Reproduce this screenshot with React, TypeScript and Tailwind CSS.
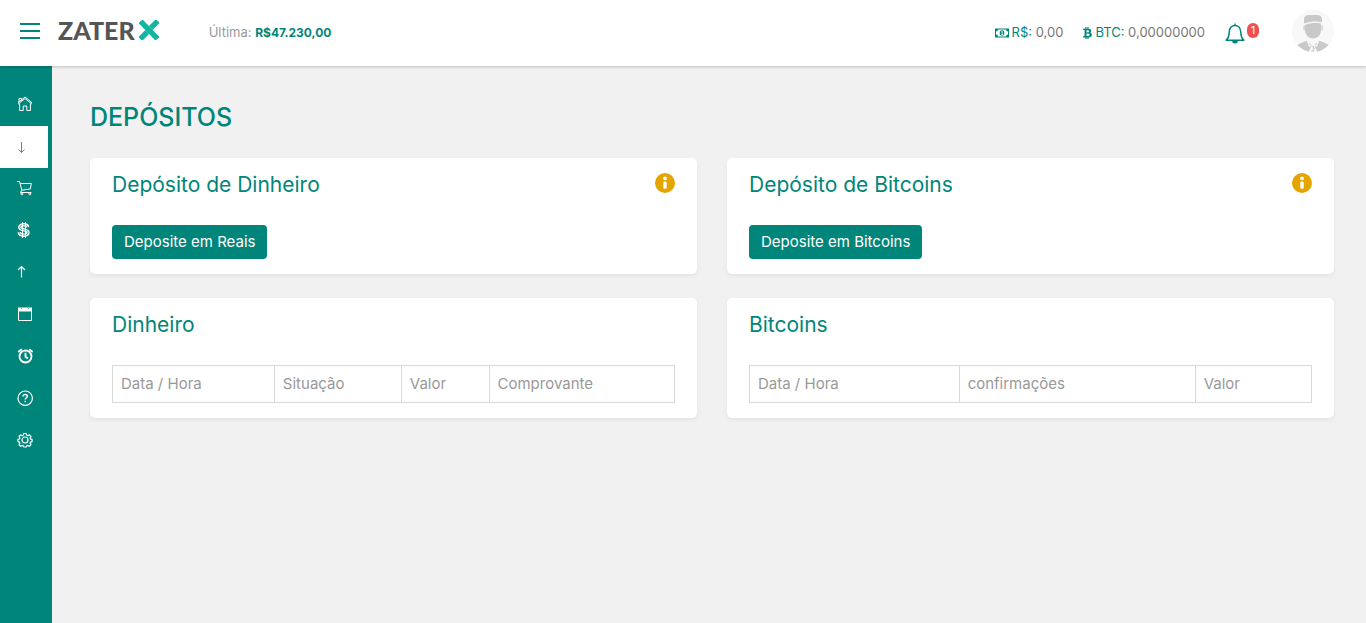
import React from "react";
import { FaBtc } from "react-icons/fa";

type IconProps = { children: React.ReactNode; className?: string };

function Icon({ children, className = "size-4" }: IconProps) {
  return (
    <svg
      viewBox="0 0 16 16"
      fill="none"
      stroke="currentColor"
      strokeWidth="1"
      aria-hidden="true"
      className={className}
    >
      {children}
    </svg>
  );
}

const navItems = [
  {
    label: "Início",
    icon: (
      <Icon>
        <path d="M1 8.200 8 2.500l7 5.700M1 6.700 8 1l7 5.700M2.600 7.500v7h3.600V10h3.600v4.500h3.600v-7M2 2.500v3.500M2 2.500h2.400v2" />
      </Icon>
    ),
  },
  {
    label: "Depósitos",
    active: true,
    icon: (
      <Icon className="size-4 opacity-80">
        <path d="M4.500 3v10.500M1.500 10.500l3 3 3-3" />
      </Icon>
    ),
  },
  {
    label: "Comprar",
    icon: (
      <Icon>
        <path d="M0 1.500h2.600l2.200 8.600M3.300 3.500h11l-1 5.500-8.500 1.200-1.200 2.300h10.800" />
        <circle cx="4.800" cy="13.800" r="1" />
        <circle cx="12.800" cy="13.800" r="1" />
      </Icon>
    ),
  },
  {
    label: "Vender",
    icon: (
      <Icon>
        <path
          strokeWidth="3.400"
          d="M10.700 5.200C10.500 3.600 8.800 2.800 6.800 2.800S2.700 3.700 2.700 5.300c0 3.500 8.300 1.800 8.300 5.200 0 1.800-1.900 2.700-4.200 2.700s-4.400-1-4.500-3"
        />
        <path
          className="stroke-[#00857b]"
          strokeWidth=".8"
          d="M10.700 5.200C10.500 3.600 8.800 2.800 6.800 2.800S2.700 3.700 2.700 5.300c0 3.500 8.300 1.800 8.300 5.200 0 1.800-1.900 2.700-4.200 2.700s-4.400-1-4.500-3"
        />
        <path d="M5.500 0v16M8.500 0v16" />
      </Icon>
    ),
  },
  {
    label: "Saques",
    icon: (
      <Icon>
        <path strokeWidth="1.200" d="M4.500 13.500V2.500M1 6l3.500-3.500L8 6" />
      </Icon>
    ),
  },
  {
    label: "Extrato",
    icon: (
      <Icon>
        <path d="M1.500 2.500h13v12h-13z" />
        <path d="M1 1.500h14v4H1z" fill="currentColor" stroke="none" />
        <path className="stroke-[#00857b]" strokeWidth=".6" d="M4.500 2v1M11.500 2v1" />
      </Icon>
    ),
  },
  {
    label: "Histórico",
    icon: (
      <Icon>
        <circle cx="8.500" cy="8.500" r="6" strokeWidth="1.800" />
        <path
          strokeWidth="1.800"
          d="M8.500 4.800v4l2.500 1.800M1.200 4l3.600-2.800M15.800 4l-3.600-2.800"
        />
      </Icon>
    ),
  },
  {
    label: "Ajuda",
    icon: (
      <Icon>
        <circle cx="8.200" cy="8.200" r="7.200" strokeWidth="1.200" />
        <path strokeWidth="1.500" d="M6 6.600c0-3 4.400-2.600 4.400-.4 0 1.600-2.200 1.500-2.200 3.400M8.200 10.800v1.400" />
      </Icon>
    ),
  },
  {
    label: "Configurações",
    icon: (
      <Icon>
        <circle cx="8" cy="8" r="3" strokeWidth="1.200" />
        <path
          strokeWidth="1.200"
          strokeLinejoin="round"
          d="M6.800 1.500h2.400l.5 1.700 1.100.5 1.600-.9 1.600 1.600-.9 1.600.5 1.100 1.500.3v2.200l-1.500.5-.5 1.100.9 1.500-1.600 1.600-1.600-.9-1.100.5-.5 1.100H6.800l-.5-1.100-1.100-.5-1.600.9L2 12.700l.9-1.500-.5-1.100-1.500-.5V7.400l1.500-.3.500-1.100L2 4.400l1.600-1.600 1.600.9 1.100-.5z"
        />
      </Icon>
    ),
  },
];

function Logo() {
  return (
    <a href="#" aria-label="ZaterX" className="ml-4 flex items-center">
      <span className="pl-0.5 font-[Lato,sans-serif] text-[25px] leading-8 font-black text-[#555557]">
        ZATER
      </span>
      <svg viewBox="0 0 20 20" className="ml-1 size-5" aria-hidden="true">
        <g stroke="#14b5a0" strokeWidth="5.400">
          <path d="M1.500 1.200 18.500 18.800" />
          <path d="M18.800 1 11.800 8M8.200 12 1.200 19" />
        </g>
      </svg>
    </a>
  );
}

function MoneyIcon() {
  return (
    <svg viewBox="0 0 14 10" className="h-[10px] w-3.5" aria-hidden="true">
      <path
        fill="#00857b"
        fillRule="evenodd"
        d="M0 .5h14v9H0zM3 1.600A2 2 0 0 1 1 3.500v3A2 2 0 0 1 3 8.400h8a2 2 0 0 1 2-1.900v-3a2 2 0 0 1-2-1.900z"
      />
      <ellipse cx="7" cy="5" rx="2.300" ry="2.800" fill="#00857b" />
      <path d="M6.300 3.900 7.200 3.300v3.200M6 6.700h2.200" stroke="#fff" strokeWidth=".8" fill="none" />
    </svg>
  );
}

function Avatar() {
  return (
    <svg viewBox="0 0 42 42" className="size-[42px]" aria-hidden="true">
      <defs>
        <clipPath id="avatar-clip">
          <circle cx="21" cy="21" r="21" />
        </clipPath>
      </defs>
      <g clipPath="url(#avatar-clip)">
        <path fill="#f8f8f8" d="M0 0h42v42H0z" />
        <g fill="#c9c9c9">
          <path d="M12 13.500V9c0-2.600 2-4 5-4h8c3 0 5 1.400 5 4v3.500l-1-.5c-5-1-10-.8-17 1.500z" />
          <path d="M13 15c5-2 10-2.500 16-1.500V20c0 5-4 8.500-8 8.500S13 25 13 20z" />
          <path d="M11.500 15.500h1.200v5h-1.200zM29.500 15.500h1.200v5h-1.200z" />
          <path d="M3 37c3-3.500 8-4.500 12-6.500l5 4.500-3.500 7H4zM39 37c-3-3.500-8-4.500-12-6.500L22 35l3.500 7H38z" />
        </g>
        <path d="m15 30.500 6 4.500 6-4.500M15 30l2.500 6 3.500-1 3.500 1L27 30" stroke="#f8f8f8" strokeWidth="1.300" fill="none" />
        <path d="m19.500 36 3 2.500-3 2.500M21.500 36v6" stroke="#d6d6d6" strokeWidth="1.200" fill="none" />
      </g>
    </svg>
  );
}

function Header() {
  return (
    <header className="relative z-10 flex h-[66px] items-center bg-white pr-8 pl-5 shadow-[0_1px_3px_rgba(0,0,0,0.2)]">
      <button type="button" aria-label="Menu" className="-mt-1 flex w-5 flex-col gap-1">
        <span className="h-0.5 bg-[#00857b]" />
        <span className="mt-px h-0.5 bg-[#00857b]" />
        <span className="mt-px h-0.5 bg-[#00857b]" />
      </button>
      <div className="-mt-1.5">
        <Logo />
      </div>
      <p className="ml-[50px] text-[13px] text-[#999]">
        Última: <strong className="text-xs font-bold text-[#00857b]">R$47.230,00</strong>
      </p>
      <div className="ml-auto flex items-center text-[13px] text-[#777]">
        <p className="flex items-center gap-[3px]">
          <MoneyIcon />
          <span>
            <span className="text-[#00857b]">R$:</span> 0,00
          </span>
        </p>
        <p className="ml-5 flex items-center gap-[3px]">
          <FaBtc className="h-3 w-[9px] text-[#00857b]" aria-hidden="true" />
          <span>
            <span className="text-[#00857b]">BTC:</span> 0,00000000
          </span>
        </p>
      </div>
      <button type="button" aria-label="Notificações" className="ml-5 flex items-start">
        <svg viewBox="0 0 20 21" className="h-[21px] w-5" fill="none" stroke="#00857b" strokeWidth="1.500" aria-hidden="true">
          <path d="M1.200 17.200C4.500 14.500 4 11.500 4.300 8.500 4.700 5 6.800 2.500 10 2.500s5.300 2.500 5.700 6c.3 3-.2 6 3.100 8.700z" strokeLinejoin="round" />
          <path d="M10 .5v2" />
          <path d="M7.200 18h5.600a2.800 2.500 0 0 1-5.600 0z" fill="#00857b" stroke="none" />
        </svg>
        <span className="ml-0.5 flex h-[15px] w-3 items-center justify-center rounded-full bg-[#ed5050] text-[11px] text-white">
          1
        </span>
      </button>
      <a href="#" aria-label="Perfil" className="-mt-1 ml-[33px]">
        <Avatar />
      </a>
    </header>
  );
}

function Sidebar() {
  return (
    <nav className="w-[52px] shrink-0 bg-[#00857b] pt-[18px] pr-1">
      {navItems.map((item) => (
        <a
          key={item.label}
          href="#"
          aria-label={item.label}
          className={
            item.active
              ? "flex h-[42px] items-center bg-white pl-[17px] text-[#00857b]"
              : "flex h-[42px] items-center pb-0.5 pl-[17px] text-white"
          }
        >
          {item.icon}
        </a>
      ))}
    </nav>
  );
}

function Card({ title, info, children }: { title: string; info?: boolean; children: React.ReactNode }) {
  return (
    <section className="rounded-[5px] bg-white px-[22px] pt-[15px] pb-[15px] shadow-[0_2px_4px_rgba(0,0,0,0.06)]">
      <div className="flex items-start justify-between">
        <h2 className="text-[21px] leading-6 font-normal text-[#00857b]">{title}</h2>
        {info && (
          <button type="button" aria-label="Informações">
            <svg viewBox="0 0 20 20" className="size-5" aria-hidden="true">
              <circle cx="10" cy="10" r="10" fill="#e5a500" />
              <circle cx="10" cy="5.300" r="1.900" fill="#fff" />
              <rect x="8.300" y="8.400" width="3.400" height="7.400" rx="1.300" fill="#fff" />
            </svg>
          </button>
        )}
      </div>
      {children}
    </section>
  );
}

function DepositButton({ children }: { children: React.ReactNode }) {
  return (
    <button
      type="button"
      className="mt-7 block h-[34px] rounded-[4px] bg-[#00857b] px-3 text-[15px] text-white"
    >
      {children}
    </button>
  );
}

function DataTable({ columns }: { columns: { label: string; width: string }[] }) {
  return (
    <table className="mt-7 w-full table-fixed border-collapse text-left text-[15px] leading-5 text-[#999]">
      <thead>
        <tr>
          {columns.map((column) => (
            <th
              key={column.label}
              scope="col"
              className={`${column.width} h-[37px] border border-[#d9d9d9] px-2 font-normal`}
            >
              {column.label}
            </th>
          ))}
        </tr>
      </thead>
    </table>
  );
}

export default function App() {
  return (
    <div className="flex min-h-screen flex-col bg-[#f1f1f1] font-[Inter,sans-serif]">
      <Header />
      <div className="flex flex-1">
        <Sidebar />
        <main className="flex-1 pt-[35px] pr-8 pb-8 pl-[38px]">
          <h1 className="text-[25px] leading-8 font-medium text-[#00857b]">DEPÓSITOS</h1>
          <div className="mt-[25px] grid grid-cols-2 gap-x-[30px] gap-y-6">
            <Card title="Depósito de Dinheiro" info>
              <DepositButton>Deposite em Reais</DepositButton>
            </Card>
            <Card title="Depósito de Bitcoins" info>
              <DepositButton>Deposite em Bitcoins</DepositButton>
            </Card>
            <Card title="Dinheiro">
              <DataTable
                columns={[
                  { label: "Data / Hora", width: "w-[28.8%]" },
                  { label: "Situação", width: "w-[22.6%]" },
                  { label: "Valor", width: "w-[15.6%]" },
                  { label: "Comprovante", width: "w-[33%]" },
                ]}
              />
            </Card>
            <Card title="Bitcoins">
              <DataTable
                columns={[
                  { label: "Data / Hora", width: "w-[37.3%]" },
                  { label: "confirmações", width: "w-[42%]" },
                  { label: "Valor", width: "w-[20.7%]" },
                ]}
              />
            </Card>
          </div>
        </main>
      </div>
    </div>
  );
}
